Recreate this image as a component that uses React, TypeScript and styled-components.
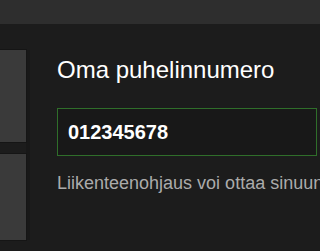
import styled, { createGlobalStyle } from 'styled-components';

const GlobalStyle = createGlobalStyle`
	html, body {
		margin: 0;
		padding: 0;
		background: #1c1c1c;
		overflow: hidden;
	}

	body {
		font-family: 'Liberation Sans', Arial, sans-serif;
	}
`;

const TopBar = styled.header`
	height: 24px;
	background-color: #2e2e2e;
`;

const Main = styled.main`
	display: flex;
	align-items: flex-start;
	height: 227px;
	background-color: #1c1c1c;
`;

const Sidebar = styled.aside`
	display: flex;
	flex-direction: column;
	gap: 12px;
	flex: none;
	width: 26px;
	margin-top: 26px;
	border-right: 4px solid #181818;
`;

const SideCard = styled.div<{ $height: number }>`
	height: ${(p) => p.$height}px;
	background-color: #3a3a3a;
	box-shadow: 0 0 0 1px #151515;
`;

const Content = styled.section`
	flex: 1;
	min-width: 0;
	padding-left: 27px;
	padding-top: 32px;
	white-space: nowrap;
	overflow: hidden;
`;

const Title = styled.h1`
	margin: 0 0 25px;
	font-size: 24px;
	font-weight: 400;
	color: #ffffff;
	line-height: 27px;
`;

const PhoneInput = styled.input`
	display: block;
	box-sizing: border-box;
	width: 260px;
	height: 48px;
	margin: 0;
	padding: 0 10px;
	border: 1px solid #2f6e2a;
	background-color: #181818;
	color: #ffffff;
	font-family: inherit;
	font-size: 20px;
	font-weight: 700;
	outline: none;
`;

const Hint = styled.p`
	margin: 17px 0 0;
	font-size: 18px;
	line-height: 21px;
	color: #ababab;
`;

export default function App() {
	return (
		<>
			<GlobalStyle />
			<TopBar />
			<Main>
				<Sidebar>
					<SideCard $height={92} />
					<SideCard $height={86} />
				</Sidebar>
				<Content>
					<Title>Oma puhelinnumero</Title>
					<PhoneInput defaultValue="012345678" readOnly />
					<Hint>Liikenteenohjaus voi ottaa sinuun yhteyttä</Hint>
				</Content>
			</Main>
		</>
	);
}
